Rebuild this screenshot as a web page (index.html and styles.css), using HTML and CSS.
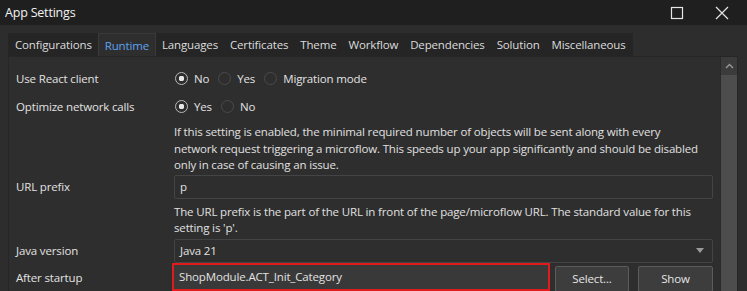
FILE: index.html
```html
<!DOCTYPE html>
<html lang="en">
<head>
    <meta charset="UTF-8">
    <title>App Settings</title>
    <link rel="stylesheet" href="styles.css">
</head>
<body>
    <div class="titlebar">
        <span class="title">App Settings</span>
        <div class="window-controls">
            <svg width="14" height="14" viewBox="0 0 14 14"><rect x="1.5" y="1.5" width="11" height="11" fill="none" stroke="#e6e6e6" stroke-width="1.2"/></svg>
            <svg width="14" height="14" viewBox="0 0 14 14"><path d="M1 1 L13 13 M13 1 L1 13" stroke="#e6e6e6" stroke-width="1.2"/></svg>
        </div>
    </div>
    <div class="main">
        <div class="tabs">
            <div class="tab">Configurations</div>
            <div class="tab active">Runtime</div>
            <div class="tab">Languages</div>
            <div class="tab">Certificates</div>
            <div class="tab">Theme</div>
            <div class="tab">Workflow</div>
            <div class="tab">Dependencies</div>
            <div class="tab">Solution</div>
            <div class="tab">Miscellaneous</div>
        </div>
        <div class="panel">
            <div class="form">
                <div class="label row-radio">Use React client</div>
                <div class="radios row-radio">
                    <label class="radio checked"><span class="dot"></span>No</label>
                    <label class="radio"><span class="dot"></span>Yes</label>
                    <label class="radio"><span class="dot"></span>Migration mode</label>
                </div>

                <div class="label row-radio">Optimize network calls</div>
                <div class="radios row-radio">
                    <label class="radio checked"><span class="dot"></span>Yes</label>
                    <label class="radio"><span class="dot"></span>No</label>
                </div>

                <div></div>
                <div class="hint">If this setting is enabled, the minimal required number of objects will be sent along with every<br>network request triggering a microflow. This speeds up your app significantly and should be disabled<br>only in case of causing an issue.</div>

                <div class="label row-field">URL prefix</div>
                <div class="field">p</div>

                <div></div>
                <div class="hint hint-after-field">The URL prefix is the part of the URL in front of the page/microflow URL. The standard value for this<br>setting is 'p'.</div>

                <div class="label row-field">Java version</div>
                <div class="field select">Java 21<span class="caret"></span></div>

                <div class="label row-field">After startup</div>
                <div class="startup">
                    <div class="field highlighted">ShopModule.ACT_Init_Category</div>
                    <button class="btn btn-select">Select...</button>
                    <button class="btn btn-show">Show</button>
                </div>
            </div>
            <div class="scrollbar">
                <div class="scroll-up">
                    <svg width="9" height="6" viewBox="0 0 9 6"><path d="M1 5 L4.5 1.5 L8 5" fill="none" stroke="#9a9a9a" stroke-width="1.3"/></svg>
                </div>
                <div class="scroll-thumb"></div>
            </div>
        </div>
    </div>
</body>
</html>
```

FILE: styles.css
```css
body {
    margin: 0;
    width: 747px;
    height: 291px;
    overflow: hidden;
    background: #2d2d2d;
    font-family: "Open Sans", "Noto Sans", sans-serif;
    font-size: 11.5px;
    letter-spacing: -0.15px;
    color: #e2e2e2;
}
.titlebar {
    height: 25px;
    background: #1f1f1f;
    display: flex;
    align-items: center;
    justify-content: space-between;
    padding-left: 5px;
}
.title {
    font-size: 12.5px;
    letter-spacing: -0.2px;
    color: #f2f2f2;
}
.window-controls {
    display: flex;
    gap: 31px;
    padding-right: 18px;
}
.main {
    padding: 8px 9px 0 8px;
}
.tabs {
    display: flex;
    align-items: flex-end;
    height: 23px;
    width: 625px;
    background: #252525;
}
.tab {
    padding: 0 6px;
    height: 21px;
    line-height: 20px;
    color: #dcdcdc;
    white-space: nowrap;
}
.tab:first-child {
    padding-left: 7px;
}
.tab.active {
    height: 23px;
    line-height: 23px;
    background: #2e2e2e;
    color: #5ea2ee;
    border: 1px solid #3a3a3a;
    border-bottom: none;
    padding: 0 6px;
    box-sizing: border-box;
}
.panel {
    display: flex;
    height: 236px;
    border: 1px solid #262626;
    border-bottom: none;
    background: #2e2e2e;
}
.form {
    flex: 1;
    display: grid;
    grid-template-columns: 158px 1fr;
    align-content: start;
    padding: 7px 7px 0 7px;
}
.label {
    color: #e2e2e2;
}
.row-radio {
    height: 28px;
    display: flex;
    align-items: center;
}
.row-field {
    display: flex;
    align-items: center;
}
.radios {
    gap: 9px;
    margin-left: 1px;
}
.radio {
    display: flex;
    align-items: center;
    gap: 6px;
}
.dot {
    width: 13px;
    height: 13px;
    border-radius: 50%;
    border: 1px solid #4a4a4a;
    box-sizing: border-box;
}
.radio.checked .dot {
    border-color: #b8b8b8;
    background: radial-gradient(circle, #e6e6e6 0 2.6px, transparent 3px);
}
.hint {
    line-height: 16.5px;
    padding: 4px 0 1px;
    color: #e0e0e0;
    white-space: nowrap;
}
.hint-after-field {
    padding: 5px 0 2px;
}
.field {
    height: 24px;
    line-height: 22px;
    box-sizing: border-box;
    border: 1px solid #444;
    border-radius: 2px;
    padding: 0 5px;
    background: #2e2e2e;
}
.select {
    display: flex;
    justify-content: space-between;
    align-items: center;
}
.caret {
    width: 0;
    height: 0;
    border-left: 4px solid transparent;
    border-right: 4px solid transparent;
    border-top: 5px solid #9a9a9a;
    margin-right: 3px;
}
.startup {
    display: flex;
    margin-left: -2px;
}
.field.highlighted {
    flex: 0 0 378px;
    height: 28px;
    line-height: 24px;
    border: 2px solid #e01b1b;
    border-radius: 0;
    background: #393939;
    padding-left: 5px;
}
.btn {
    height: 26px;
    margin-top: 3px;
    background: #3d3d3d;
    border: 1px solid #5c5c5c;
    border-radius: 2px;
    color: #e6e6e6;
    font-family: inherit;
    font-size: 11.5px;
    letter-spacing: -0.15px;
    padding: 0;
}
.btn-select {
    width: 74px;
    margin-left: 5px;
}
.btn-show {
    width: 75px;
    margin-left: 9px;
}
.scrollbar {
    width: 17px;
    display: flex;
    flex-direction: column;
    border-left: 1px solid #2a2a2a;
}
.scroll-up {
    height: 18px;
    background: #3b3b3b;
    display: flex;
    justify-content: center;
    align-items: center;
}
.scroll-thumb {
    flex: 1;
    background: #4d4d4d;
}
```
